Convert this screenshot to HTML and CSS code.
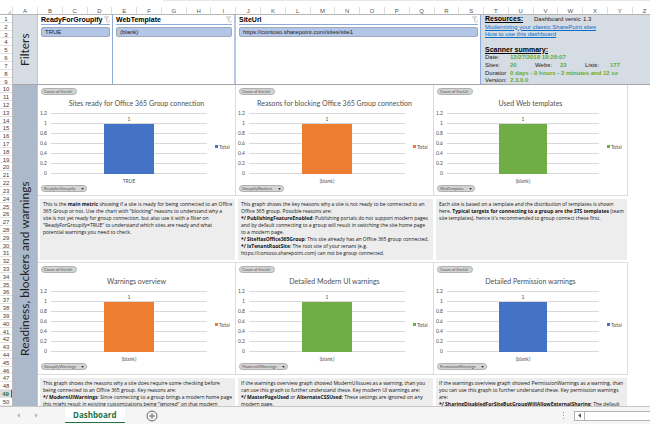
FILE: index.html
```html
<!DOCTYPE html>
<html lang="en">
<head>
    <meta charset="UTF-8">
    <title>Dashboard</title>
    <link rel="stylesheet" href="styles.css">
</head>
<body>
<div class="formula-edge"></div>
<div class="col-headers">
    <span class="corner"><svg viewBox="0 0 4 4"><path d="M4 0V4H0Z"/></svg></span>
    <span class="col-a">A</span>
    <div id="columns" class="col-list"></div>
</div>

<main class="sheet">
    <div id="rows" class="row-list"></div>

    <div class="content">
        <section class="filters">
            <h2 class="band band--light">Filters</h2>
            <div class="filters__grid">
                <div class="slicer">
                    <div class="slicer__head">ReadyForGroupify
                        <svg class="slicer__clear" viewBox="0 0 8 8"><path d="M1 1H7M2 2.500H6M4 2.500V6.500M5 5L7.500 7.500M7.500 5L5 7.500"/></svg>
                    </div>
                    <button class="slicer__item">TRUE</button>
                </div>
                <div class="slicer slicer--template">
                    <div class="slicer__head">WebTemplate
                        <svg class="slicer__clear" viewBox="0 0 8 8"><path d="M1 1H7M2 2.500H6M4 2.500V6.500M5 5L7.500 7.500M7.500 5L5 7.500"/></svg>
                    </div>
                    <button class="slicer__item">(blank)</button>
                </div>
                <div class="slicer">
                    <div class="slicer__head">SiteUrl
                        <svg class="slicer__clear" viewBox="0 0 8 8"><path d="M1 1H7M2 2.500H6M4 2.500V6.500M5 5L7.500 7.500M7.500 5L5 7.500"/></svg>
                    </div>
                    <button class="slicer__item">https://contoso.sharepoint.com/sites/site1</button>
                </div>
                <div class="info">
                    <div class="info__row"><b class="info__title info__wide">Resources:</b><span class="info__wide info__clip">Dashboard versic</span><span>1.3</span></div>
                    <div class="info__row"><a href="#">Modernizing your classic SharePoint sites</a></div>
                    <div class="info__row"><a href="#">How to use this dashboard</a></div>
                    <div class="info__row"></div>
                    <div class="info__row"><b class="info__title">Scanner summary:</b></div>
                    <div class="info__row"><span>Date:</span><b>12/27/2018 18:28:07</b></div>
                    <div class="info__row"><span>Sites:</span><b>20</b><span>Webs:</span><b>23</b><span>Lists:</span><b>177</b></div>
                    <div class="info__row"><span>Duratior</span><b>0 days - 0 hours - 2 minutes and 12 se</b></div>
                    <div class="info__row"><span>Version:</span><b>2.3.0.0</b></div>
                </div>
            </div>
        </section>

        <section class="report">
            <h2 class="band band--dark">Readiness, blockers and warnings</h2>
            <div class="cards">
                <div class="chart" data-title="Sites ready for Office 365 Group connection" data-label="TRUE" data-field="ReadyforGroupify" data-color="blue"></div>
                <div class="chart" data-title="Reasons for blocking Office 365 Group connection" data-label="(blank)" data-field="GroupifyBlockers" data-color="orange"></div>
                <div class="chart" data-title="Used Web templates" data-label="(blank)" data-field="WebTemplate" data-color="green"></div>

                <p class="note">This is the <b>main metric</b> showing if a site is ready for being connected to an Office<br>
                    365 Group or not. Use the chart with "blocking" reasons to understand why a<br>
                    site is not yet ready for group connection, but also use it with a filter on<br>
                    "ReadyForGroupify=TRUE" to understand which sites are ready and what<br>
                    potential warnings you need to check.</p>
                <p class="note">This graph shows the key reasons why a site is not ready to be connected to an<br>
                    Office 365 group. Possible reasons are:<br>
                    <b>*/ PublishingFeatureEnabled</b>: Publishing portals do not support modern pages<br>
                    and by default connecting to a group will result in switching the site home page<br>
                    to a modern page.<br>
                    <b>*/ SiteHasOffice365Group</b>: This site already has an Office 365 group connected.<br>
                    <b>*/ IsTenantRootSite</b>: The root site of your tenant (e.g.<br>
                    https://contoso.sharepoint.com) can not be group connected.</p>
                <p class="note">Each site is based on a template and the distribution of templates is shown<br>
                    here. <b>Typical targets for connecting to a group are the STS templates</b> (team<br>
                    site templates), hence it's recommended to group connect these first.</p>

                <div class="chart" data-title="Warnings overview" data-label="(blank)" data-field="GroupifyWarnings" data-color="orange"></div>
                <div class="chart" data-title="Detailed Modern UI warnings" data-label="(blank)" data-field="ModernUIWarnings" data-color="green"></div>
                <div class="chart" data-title="Detailed Permission warnings" data-label="(blank)" data-field="PermissionWarnings" data-color="blue"></div>

                <p class="note">This graph shows the reasons why a site does require some checking before<br>
                    being connected to an Office 365 group. Key reasons are:<br>
                    <b>*/ ModernUIWarnings</b>: Since connecting to a group brings a modern home page<br>
                    this might result in existing customizations being "ignored" on that modern</p>
                <p class="note">If the warnings overview graph showed ModernUIIssues as a warning, than you<br>
                    can use this graph to further understand these. Key modern UI warnings are:<br>
                    <b>*/ MasterPageUsed</b> or <b>AlternateCSSUsed</b>: These settings are ignored on any<br>
                    modern page.</p>
                <p class="note">If the warnings overview graph showed PermissionWarnings as a warning, than<br>
                    you can use this graph to further understand these. Key permission warnings<br>
                    are:<br>
                    <b>*/ SharingDisabledForSiteButGroupWillAllowExternalSharing</b>: The default</p>
            </div>
        </section>
    </div>
</main>

<footer class="tabs">
    <button class="tabs__nav" aria-label="Previous sheet"><svg viewBox="0 0 4 6"><path d="M4 0V6L0 3Z"/></svg></button>
    <button class="tabs__nav" aria-label="Next sheet"><svg viewBox="0 0 4 6"><path d="M0 0V6L4 3Z"/></svg></button>
    <a href="#" class="tabs__sheet">Dashboard</a>
    <button class="tabs__add" aria-label="New sheet">
        <svg viewBox="0 0 12 12"><circle cx="6" cy="6" r="5"/><path d="M6 3V9M3 6H9"/></svg>
    </button>
    <svg class="tabs__grip" viewBox="0 0 2 8"><path d="M0 0H1V1H0ZM0 3H1V4H0ZM0 6H1V7H0Z"/></svg>
    <div class="tabs__scroll">
        <button class="tabs__left" aria-label="Scroll left"><svg viewBox="0 0 4 6"><path d="M4 0V6L0 3Z"/></svg></button>
    </div>
</footer>

<script>
    const ticks = ['1.2', '1', '0.8', '0.6', '0.4', '0.2', '0']

    // column letters B..Z
    document.getElementById('columns').innerHTML =
        Array.from('BCDEFGHIJKLMNOPQRSTUVWXYZ').map(c => `<span>${c}</span>`).join('')

    // row numbers 1..50, 49 is the selected one
    document.getElementById('rows').innerHTML =
        Array.from({length: 50}, (_, i) => `<span class="${i === 48 ? 'row--selected' : 'row'}">${i + 1}</span>`).join('')

    document.querySelectorAll('.chart').forEach(el => {
        const {title, label, field, color} = el.dataset
        el.classList.add('chart--' + color)
        el.innerHTML = `
            <button class="pill">Count of SiteUrl</button>
            <h3 class="chart__title">${title}</h3>
            <div class="chart__body">
                <div class="chart__axis">${ticks.map(t => `<span>${t}</span>`).join('')}</div>
                <div class="chart__plot">
                    <div class="chart__lines">${ticks.slice(1).map(() => '<i></i>').join('')}</div>
                    <div class="chart__bar"><span>1</span></div>
                </div>
                <div class="chart__legend"><i></i>Total</div>
                <div class="chart__label">${label}</div>
            </div>
            <label class="field">
                <select class="pill pill--field" aria-label="${field}"><option>${field}</option></select>
                <svg class="field__arrow" viewBox="0 0 4 3"><path d="M0 0H4L2 3Z"/></svg>
            </label>`
    })
</script>
</body>
</html>
```
FILE: styles.css
```css
* {
    box-sizing: border-box;
}

body {
    margin: 0;
    height: 100vh;
    display: flex;
    flex-direction: column;
    overflow: hidden;
    background-color: #fff;
    color: #222;
    font-family: "Liberation Sans", Arial, sans-serif;
    font-size: 6px;
}

button,
select {
    margin: 0;
    padding: 0;
    border: 0;
    background: none;
    color: inherit;
    font: inherit;
}

h2,
h3,
p {
    margin: 0;
    font-weight: normal;
}

svg {
    display: block;
}

.formula-edge {
    height: 1px;
    margin-left: 25%;
    background-color: #e6e6e6;
}

/* headers */
.col-headers {
    display: flex;
    flex: none;
    height: 14px;
    padding-top: 6px;
    border-bottom: 1px solid #b5b5b5;
    color: #555;
    line-height: 8px;
    text-align: center;
}

.corner {
    width: 12px;
    padding: 3px 1px 0 7px;
}

.corner svg {
    width: 4px;
    height: 4px;
    fill: #d0d0d0;
}

.col-a {
    width: 26px;
    border-left: 1px solid #ddd;
    border-right: 1px solid #ddd;
}

.col-list {
    flex: 1;
    display: grid;
    grid-template-columns: repeat(25, 4.05%);
    overflow: hidden;
}

.col-list span {
    border-right: 1px solid #ddd;
}

.sheet {
    flex: 1;
    min-height: 0;
    display: flex;
}

.row-list {
    flex: none;
    width: 13px;
    display: flex;
    flex-direction: column;
    border-right: 1px solid #bbb;
    color: #444;
    text-align: center;
}

.row,
.row--selected {
    flex: 1;
    min-height: 0;
    border-bottom: 1px solid #e2e2e2;
    line-height: 8px;
}

.row--selected {
    background-color: #dcdcdc;
    border-right: 1px solid #217346;
    color: #217346;
    font-weight: bold;
}

.content {
    flex: 1;
    min-width: 0;
    display: flex;
    flex-direction: column;
}

.band {
    flex: none;
    width: 25px;
    display: flex;
    align-items: center;
    justify-content: center;
    border-left: 1px solid #c4c4c4;
    writing-mode: vertical-rl;
    transform: rotate(180deg);
    font-family: Lato, "Open Sans", sans-serif;
    font-size: 12px;
    line-height: 14px;
    white-space: nowrap;
}

.band--light {
    background-color: #d6dce4;
}

.band--dark {
    justify-content: flex-start;
    padding-top: 50px;
    background-color: #acb9ca;
}

/* filters */
.filters {
    flex: none;
    display: flex;
    height: 70px;
    border-bottom: 1px solid #a6a6a6;
}

.filters__grid {
    flex: 1;
    min-width: 0;
    display: grid;
    grid-template-columns: 75fr 123fr 245fr 169fr;
}

.slicer {
    min-width: 0;
    padding: 1px 2px 0 3px;
    border-right: 1px solid #8faadc;
    overflow: hidden;
}

.slicer--template {
    border-right: 2px solid #b4c7e7;
}

.slicer__head {
    display: flex;
    justify-content: space-between;
    height: 9px;
    border-bottom: 1px solid #8faadc;
    color: #000;
    font-size: 7px;
    font-weight: bold;
    line-height: 8px;
}

.slicer__clear {
    flex: none;
    width: 7px;
    height: 7px;
    fill: none;
    stroke: #c2c2c2;
}

.slicer__item {
    display: block;
    width: 100%;
    height: 10px;
    margin-top: 2px;
    padding-left: 3px;
    border: 1px solid #a0a9ba;
    border-radius: 2px;
    background-color: #b4c6e7;
    line-height: 8px;
    text-align: left;
}

.info {
    min-width: 0;
    display: flex;
    flex-direction: column;
    padding-left: 4px;
    background-color: #d6dce4;
    overflow: hidden;
}

.info__row {
    flex: 1;
    min-height: 0;
    display: flex;
    line-height: 8px;
    white-space: nowrap;
}

.info__row span,
.info__row b {
    flex: none;
    width: 25px;
}

.info__row b {
    color: #5fae36;
}

.info__row .info__title {
    color: #000;
    font-size: 7px;
    text-decoration: underline;
}

.info__row .info__wide {
    width: 49px;
}

.info__clip {
    overflow: hidden;
}

.info a {
    color: #0b6fc7;
}

/* charts and notes */
.report {
    flex: 1;
    min-height: 0;
    display: flex;
    font-family: "Open Sans", "Noto Sans", sans-serif;
}

.cards {
    flex: 1;
    min-width: 0;
    display: grid;
    grid-template-columns: 198fr 198fr 194fr;
    grid-template-rows: 111px 66px 113px 60px;
    padding-right: 22px;
    overflow: hidden;
}

.chart {
    min-width: 0;
    padding: 3px;
    border-right: 1px solid #dcdcdc;
    border-bottom: 1px solid #dcdcdc;
    font-family: Lato, sans-serif;
}

.chart--blue {
    --series: #4472c4;
}

.chart--orange {
    --series: #ed7d31;
}

.chart--green {
    --series: #70ad47;
}

.note + .chart,
.note + .chart ~ .chart {
    border-top: 1px solid #dcdcdc;
}

.pill {
    display: block;
    width: 36px;
    height: 7px;
    padding: 0 2px;
    border: 1px solid #b0b0b0;
    border-radius: 4px;
    background-color: #d4d4d4;
    color: #555;
    font-size: 4px;
    line-height: 5px;
    text-align: left;
    white-space: nowrap;
}

.pill--field {
    width: auto;
    padding-right: 10px;
    appearance: none;
}

.field {
    display: inline-grid;
    align-items: center;
    vertical-align: top;
}

.field > * {
    grid-area: 1 / 1;
}

.field__arrow {
    justify-self: end;
    width: 3px;
    height: 2px;
    margin-right: 3px;
    fill: #333;
    pointer-events: none;
}

.chart__title {
    padding-top: 3px;
    color: #505050;
    font-size: 7px;
    line-height: 10px;
    text-align: center;
}

.chart__body {
    display: grid;
    grid-template-columns: 6px 1fr 21px;
    grid-template-rows: 70px 7px;
    color: #505050;
    font-size: 5px;
}

.chart__axis {
    display: flex;
    flex-direction: column;
    align-items: flex-end;
    line-height: 10px;
}

.chart__plot {
    display: grid;
    margin: 5px 4px 5px 4px;
}

.chart__plot > * {
    grid-area: 1 / 1;
}

.chart__lines {
    border-top: 1px solid #d9d9d9;
}

.chart__lines i {
    display: block;
    height: 10px;
    border-bottom: 1px solid #d9d9d9;
}

.chart__bar {
    justify-self: center;
    align-self: end;
    width: 32%;
    height: 50px;
    background-color: var(--series);
    text-align: center;
}

.chart__bar span {
    display: block;
    margin-top: -8px;
    line-height: 6px;
}

.chart__legend {
    display: flex;
    align-items: center;
    gap: 1px;
    padding: 7px 0 0 4px;
}

.chart__legend i {
    width: 3px;
    height: 3px;
    background-color: var(--series);
}

.chart__label {
    grid-column: 2;
    line-height: 6px;
    text-align: center;
}

.note {
    min-width: 0;
    margin: 3px 1px 2px 2px;
    padding: 2px 0 0 3px;
    background-color: #ededed;
    color: #111;
    font-size: 5px;
    line-height: 7px;
    white-space: nowrap;
}

/* sheet tabs */
.tabs {
    flex: none;
    display: flex;
    align-items: center;
    height: 18px;
    border-top: 1px solid #c8c8c8;
    background-color: #f5f5f5;
}

.tabs__nav {
    width: 18px;
    padding-left: 7px;
}

.tabs__nav:first-child {
    margin-left: 10px;
}

.tabs__nav svg {
    width: 3px;
    height: 5px;
    fill: #bbb;
}

.tabs__sheet {
    align-self: flex-start;
    height: 16px;
    margin-left: 19px;
    padding: 0 8px;
    border-bottom: 1px solid #217346;
    background-color: #fff;
    color: #217346;
    font-family: "Open Sans", sans-serif;
    font-size: 8px;
    font-weight: bold;
    line-height: 15px;
    text-decoration: none;
}

.tabs__add {
    margin-left: 21px;
}

.tabs__add svg {
    width: 12px;
    height: 12px;
    fill: none;
    stroke: #666;
}

.tabs__grip {
    width: 2px;
    height: 8px;
    margin-left: auto;
    fill: #999;
}

.tabs__scroll {
    width: 76px;
    height: 10px;
    margin-left: 9px;
    border: 1px solid #b5b5b5;
    border-right: 0;
    background-color: #fff;
}

.tabs__left {
    height: 8px;
    padding: 0 3px;
    border-right: 1px solid #b5b5b5;
}

.tabs__left svg {
    width: 3px;
    height: 5px;
    fill: #555;
}
```
